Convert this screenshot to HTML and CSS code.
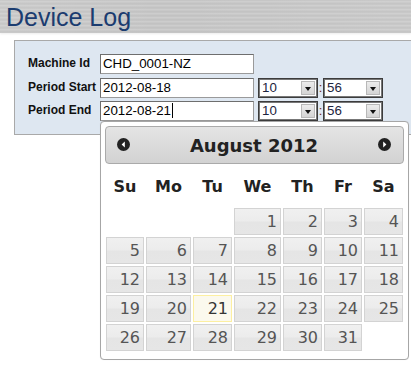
FILE: index.html
```html
<!DOCTYPE html>
<html>
<head>
<meta charset="utf-8">
<link rel="stylesheet" href="styles.css">
</head>
<body>
<div class="header"><h1 class="title">Device Log</h1></div>
<div class="panel">
  <div class="row">
    <label class="lbl">Machine Id</label>
    <div class="txt">CHD_0001-NZ</div>
  </div>
  <div class="row">
    <label class="lbl">Period Start</label>
    <div class="txt">2012-08-18</div>
    <div class="sel"><span class="val">10</span><span class="arr"></span></div>
    <span class="colon">:</span>
    <div class="sel"><span class="val">56</span><span class="arr"></span></div>
  </div>
  <div class="row">
    <label class="lbl">Period End</label>
    <div class="txt">2012-08-21<span class="caret"></span></div>
    <div class="sel"><span class="val">10</span><span class="arr"></span></div>
    <span class="colon">:</span>
    <div class="sel"><span class="val">56</span><span class="arr"></span></div>
  </div>
</div>

<div class="dp">
  <div class="dp-head">
    <svg class="nav" width="13" height="13" viewBox="0 0 13 13"><circle cx="6.5" cy="6.5" r="6.5" fill="#222"/><path d="M7.8 3.6 L4.6 6.5 L7.8 9.4 Z" fill="#fff"/></svg>
    <span class="dp-title">August 2012</span>
    <svg class="nav" width="13" height="13" viewBox="0 0 13 13"><circle cx="6.5" cy="6.5" r="6.5" fill="#222"/><path d="M5.2 3.6 L8.4 6.5 L5.2 9.4 Z" fill="#fff"/></svg>
  </div>
  <div class="cal">
    <div class="wd">Su</div><div class="wd">Mo</div><div class="wd">Tu</div><div class="wd">We</div><div class="wd">Th</div><div class="wd">Fr</div><div class="wd">Sa</div>
    <div class="empty"></div><div class="empty"></div><div class="empty"></div>
    <div class="day">1</div><div class="day">2</div><div class="day">3</div><div class="day">4</div>
    <div class="day">5</div><div class="day">6</div><div class="day">7</div><div class="day">8</div><div class="day">9</div><div class="day">10</div><div class="day">11</div>
    <div class="day">12</div><div class="day">13</div><div class="day">14</div><div class="day">15</div><div class="day">16</div><div class="day">17</div><div class="day">18</div>
    <div class="day">19</div><div class="day">20</div><div class="day today">21</div><div class="day">22</div><div class="day">23</div><div class="day">24</div><div class="day">25</div>
    <div class="day">26</div><div class="day">27</div><div class="day">28</div><div class="day">29</div><div class="day">30</div><div class="day">31</div><div class="empty"></div>
  </div>
</div>
</body>
</html>
```
FILE: styles.css
```css
html, body {
  margin: 0;
  padding: 0;
  background: #fff;
  overflow: hidden;
}
body {
  width: 411px;
  height: 369px;
  position: relative;
  font-family: "Liberation Sans", Arial, sans-serif;
}
.header {
  height: 33px;
  background:
    linear-gradient(90deg, rgba(255,255,255,0.08), rgba(255,255,255,0) 40%, rgba(255,255,255,0.06)),
    repeating-linear-gradient(180deg, #c5c5c5 0 1px, #cdcdcd 1px 2px, #c8c8c8 2px 3px, #c2c2c2 3px 4px);
  box-shadow: 0 1px 2px rgba(0,0,0,0.08);
}
.title {
  margin: 0;
  padding: 3px 0 0 6px;
  font-size: 25px;
  font-weight: normal;
  line-height: 28px;
  color: #1b3c70;
}
.panel {
  margin: 7px 0 0 14px;
  border: 1px solid #a9a9a9;
  border-right: none;
  background: #dee7f1;
  padding: 13px 0 13px 13px;
  display: flex;
  flex-direction: column;
  gap: 3px;
}
.row {
  display: flex;
  align-items: flex-start;
  height: 20px;
}
.row:first-child { height: 21px; }
.lbl {
  width: 72px;
  font-size: 12px;
  font-weight: bold;
  color: #111;
  padding-top: 2px;
  line-height: 14px;
}
.txt {
  box-sizing: border-box;
  width: 154px;
  height: 20px;
  background: #fff;
  border: 1px solid #6e6e6e;
  border-right-color: #9a9a9a;
  border-bottom-color: #9a9a9a;
  font-size: 13.3px;
  line-height: 18px;
  padding-left: 2px;
  color: #000;
}
.caret {
  display: inline-block;
  width: 1px;
  height: 15px;
  background: #000;
  vertical-align: -3px;
  margin-left: 1px;
}
.sel {
  box-sizing: border-box;
  width: 60px;
  height: 20px;
  margin-left: 4px;
  background: #fff;
  border: 1px solid #3c3c3c;
  box-shadow: inset 0 0 0 1px #777;
  display: flex;
  align-items: center;
  justify-content: space-between;
  padding: 0 2px 0 3px;
}
.sel + .colon + .sel { margin-left: 0; }
.val {
  font-size: 13.3px;
  color: #1d2540;
  line-height: 16px;
}
.arr {
  width: 14px;
  height: 14px;
  box-sizing: border-box;
  border: 1px solid #b8b8b8;
  background: linear-gradient(#ececec, #d4d4d4);
  position: relative;
}
.arr::after {
  content: "";
  position: absolute;
  left: 3px;
  top: 5px;
  border-left: 3.5px solid transparent;
  border-right: 3.5px solid transparent;
  border-top: 4px solid #111;
}
.colon {
  width: 5px;
  text-align: center;
  font-size: 13px;
  line-height: 20px;
  color: #7a2a1a;
}

/* datepicker */
.dp {
  position: absolute;
  left: 100px;
  top: 121px;
  width: 309px;
  box-sizing: border-box;
  border: 1px solid #a6a6a6;
  border-radius: 4px;
  background: #fff;
  padding: 4px 4px 7px 4px;
  font-family: "DejaVu Sans", Verdana, sans-serif;
  box-shadow: 0 0 1px rgba(0,0,0,0.1);
}
.dp-head {
  height: 38px;
  box-sizing: border-box;
  border: 1px solid #aaa;
  border-radius: 4px;
  background: linear-gradient(#e4e4e4, #d2d2d2);
  display: flex;
  align-items: center;
  padding: 0 12px 2px 11px;
}
.dp-title {
  flex: 1;
  text-align: center;
  font-weight: bold;
  font-size: 18px;
  color: #222;
  padding-top: 2px;
}
.nav { display: block; }
.cal {
  display: grid;
  grid-template-columns: 40px 47px 41px 49px 41px 40px 41px;
  grid-template-rows: 43px repeat(5, 29px);
}
.wd {
  display: flex;
  align-items: center;
  justify-content: center;
  font-weight: bold;
  font-size: 16px;
  color: #222;
  padding-top: 1px;
}
.day {
  margin: 1px;
  border: 1px solid #d3d3d3;
  background: linear-gradient(#f0f0f0 0%, #ececec 48%, #e5e5e5 52%, #e6e6e6 100%);
  color: #555;
  font-size: 16px;
  line-height: 25px;
  text-align: right;
  padding-right: 3px;
}
.day.today {
  border-color: #fcefa1;
  background: #fbf9ee;
  color: #363636;
}
```
